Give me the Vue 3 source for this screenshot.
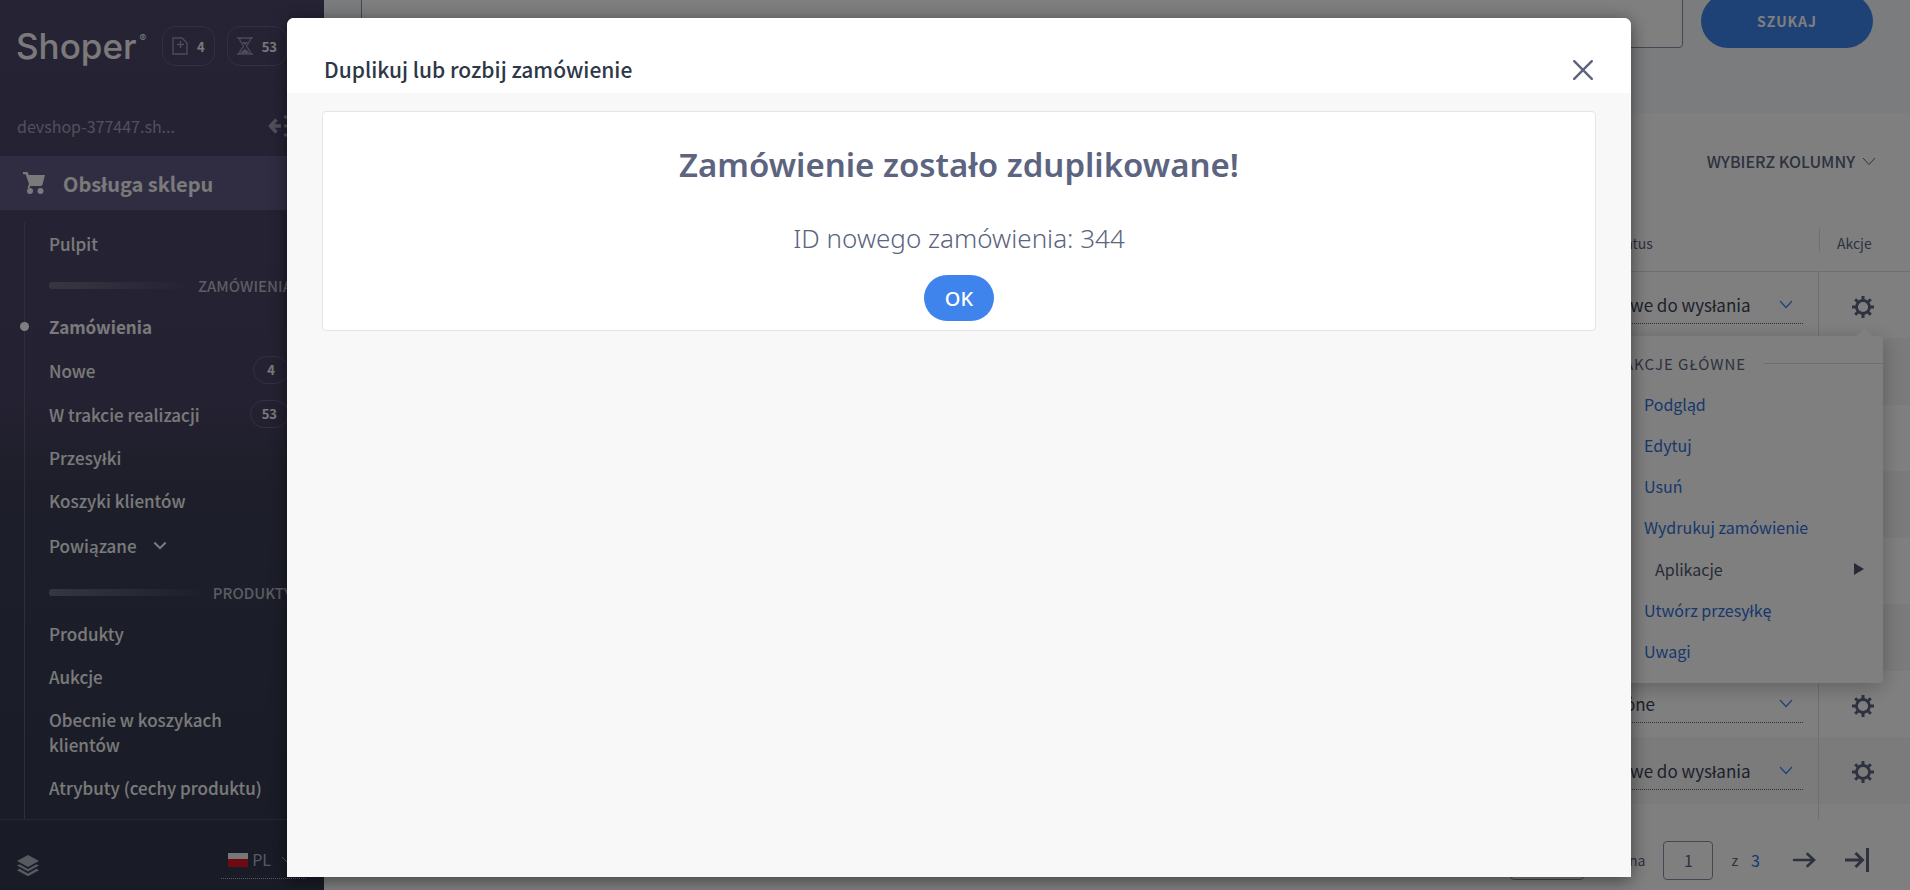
<template>
  <div class="page">
    <aside class="sidebar">
      <header class="brand">
        <a href="#" class="logo">Shoper<sup>®</sup></a>
        <a href="#" class="counter">
          <svg width="16" height="18" viewBox="0 0 16 18" fill="none" stroke="currentColor" stroke-width="1.4">
            <path d="M1 1h9l5 5v11H1zM8.500 4v7M5 7.500h7" />
          </svg>
          <span>4</span>
        </a>
        <a href="#" class="counter">
          <svg width="16" height="18" viewBox="0 0 16 18" fill="none" stroke="currentColor" stroke-width="1.3">
            <path d="M0 1h16M0 17h16M2.500 1c0 5 4 6 4 8s-4 3-4 8M13.500 1c0 5-4 6-4 8s4 3 4 8" />
            <path d="M5 5h6l-3 3zM4 16.500c0-3 3-3 4-5 1 2 4 2 4 5z" fill="currentColor" stroke="none" />
          </svg>
          <span>53</span>
        </a>
      </header>

      <div class="shop">
        <span>devshop-377447.sh...</span>
        <button class="plain" aria-label="Zwiń menu">
          <svg width="24" height="22" viewBox="0 0 24 22" fill="none" stroke="currentColor" stroke-width="3.400">
            <path d="M8.500 4.500L2.500 11l6 6.500M3 11h10" />
            <path d="M17.500 2v.01M17.500 11v.01M17.500 20v.01" stroke-linecap="round" />
          </svg>
        </button>
      </div>

      <a href="#" class="section">
        <svg width="22" height="22" viewBox="0 0 22 22" fill="currentColor">
          <path d="M0 0h4.500l1.300 3H22l-2.500 9.500c-.2.900-.9 1.500-1.900 1.500H7.200L6.700 16H4.500L6 12 2.700 2.200H0z" />
          <circle cx="7" cy="19" r="3" />
          <circle cx="17.500" cy="19" r="3" />
        </svg>
        Obsługa sklepu
      </a>

      <nav class="menu">
        <template v-for="item in menu" :key="item.label">
          <div v-if="item.heading" class="menu-heading"><i></i>{{ item.label }}</div>
          <a v-else href="#" class="menu-item" :class="{ active: item.active, expandable: item.expandable }">
            <span>{{ item.label }}</span>
            <svg v-if="item.expandable" width="14" height="9" viewBox="0 0 16 10" fill="none" stroke="currentColor" stroke-width="2.400">
              <path d="M1.500 1.500L8 8l6.500-6.500" />
            </svg>
            <b v-if="item.count">{{ item.count }}</b>
          </a>
        </template>
      </nav>

      <footer class="side-footer">
        <svg width="22" height="22" viewBox="0 0 22 22" fill="currentColor">
          <path d="M11 0l11 6-11 6L0 6z" />
          <path d="M2.500 9.200L11 14l8.500-4.800L22 10.600l-11 6-11-6z" />
          <path d="M2.500 13.800L11 18.400l8.500-4.600L22 15.200l-11 6-11-6z" />
        </svg>
        <button class="plain lang">
          <i class="flag"></i>PL
          <svg width="12" height="8" viewBox="0 0 12 8" fill="none" stroke="currentColor"><path d="M1 1l5 5 5-5" /></svg>
        </button>
      </footer>
    </aside>

    <main class="content">
      <form class="search" @submit.prevent>
        <input type="text" aria-label="Szukaj zamówienia" />
        <button>SZUKAJ</button>
      </form>

      <div class="toolbar">
        <button class="plain">
          WYBIERZ KOLUMNY
          <svg width="14" height="9" viewBox="0 0 14 9" fill="none" stroke="currentColor"><path d="M1 1l6 6.500L13 1" /></svg>
        </button>
      </div>

      <table class="orders">
        <thead>
          <tr>
            <th></th>
            <th class="status">Status</th>
            <th class="actions">Akcje</th>
          </tr>
        </thead>
        <tbody>
          <tr v-for="(status, i) in orders" :key="i">
            <td></td>
            <td class="status">
              <div class="select">
                <select aria-label="Status zamówienia">
                  <option>{{ status }}</option>
                </select>
                <svg width="14" height="9" viewBox="0 0 14 9" fill="none" stroke="currentColor" stroke-width="1.200"><path d="M1 1l6 6.500L13 1" /></svg>
              </div>
            </td>
            <td class="actions">
              <button class="plain gear" aria-label="Akcje">
                <svg width="22" height="22" viewBox="-11 -11 22 22" fill="none" stroke="currentColor">
                  <circle r="6.500" stroke-width="2.800" />
                  <path d="M0-7v-4M0 7v4M-7 0h-4M7 0h4" stroke-width="3" />
                  <path d="M5-5l2.800-2.800M-5-5l-2.800-2.800M5 5l2.800 2.800M-5 5l-2.800 2.800" stroke-width="3" />
                </svg>
              </button>
              <div v-if="i === 0" class="dropdown">
                <h4>AKCJE GŁÓWNE</h4>
                <template v-for="action in actions" :key="action">
                  <button v-if="action === 'Aplikacje'" class="plain submenu">
                    {{ action }}
                    <svg width="10" height="12" viewBox="0 0 10 12" fill="currentColor"><path d="M0 0l10 6-10 6z" /></svg>
                  </button>
                  <a v-else href="#">{{ action }}</a>
                </template>
              </div>
            </td>
          </tr>
        </tbody>
        <tfoot>
          <tr>
            <td></td>
            <td></td>
            <td class="actions"></td>
          </tr>
        </tfoot>
      </table>

      <div class="pagination">
        <select class="per-page" aria-label="Liczba na stronie">
          <option>10</option>
        </select>
        <label for="page-number">Strona</label>
        <input id="page-number" v-model="page" type="text" />
        <span>z</span>
        <a href="#" class="last-number">3</a>
        <button class="plain next" aria-label="Następna strona">
          <svg width="24" height="16" viewBox="0 0 24 16" fill="none" stroke="currentColor" stroke-width="2.600" stroke-linecap="round">
            <path d="M2 8h19M15.500 2l6.500 6-6.500 6" />
          </svg>
        </button>
        <button class="plain" aria-label="Ostatnia strona">
          <svg width="26" height="24" viewBox="0 0 26 24" fill="none" stroke="currentColor" stroke-width="3">
            <path d="M1 12h17M11.500 5l7 7-7 7M23.500 0v24" />
          </svg>
        </button>
      </div>
    </main>

    <div v-if="open" class="overlay">
      <section class="modal" role="dialog" aria-labelledby="modal-title">
        <header class="modal-header">
          <h2 id="modal-title">Duplikuj lub rozbij zamówienie</h2>
          <button class="plain" aria-label="Zamknij" @click="open = false">
            <svg width="20" height="20" viewBox="0 0 20 20" fill="none" stroke="currentColor" stroke-width="2.400" stroke-linecap="round">
              <path d="M1.200 1.200l17.600 17.600M18.800 1.200L1.200 18.800" />
            </svg>
          </button>
        </header>
        <div class="modal-body">
          <div class="card">
            <h1>Zamówienie zostało zduplikowane!</h1>
            <p>ID nowego zamówienia: {{ newOrderId }}</p>
            <button class="ok" @click="open = false">OK</button>
          </div>
        </div>
      </section>
    </div>
  </div>
</template>

<script setup>
import { ref } from 'vue'

const open = ref(true)
const page = ref('1')
const newOrderId = 344

const menu = [
  { label: 'Pulpit' },
  { label: 'ZAMÓWIENIA', heading: true },
  { label: 'Zamówienia', active: true },
  { label: 'Nowe', count: 4 },
  { label: 'W trakcie realizacji', count: 53 },
  { label: 'Przesyłki' },
  { label: 'Koszyki klientów' },
  { label: 'Powiązane', expandable: true },
  { label: 'PRODUKTY', heading: true },
  { label: 'Produkty' },
  { label: 'Aukcje' },
  { label: 'Obecnie w koszykach klientów' },
  { label: 'Atrybuty (cechy produktu)' },
]

const actions = ['Podgląd', 'Edytuj', 'Usuń', 'Wydrukuj zamówienie', 'Aplikacje', 'Utwórz przesyłkę', 'Uwagi']

const orders = [
  'Gotowe do wysłania',
  'Gotowe do wysłania',
  'Złożone',
  'Gotowe do wysłania',
  'Złożone',
  'Gotowe do wysłania',
  'Złożone',
  'Gotowe do wysłania',
]
</script>

<style>
body {
  margin: 0;
  overflow: hidden;
}
</style>

<style scoped>
* {
  box-sizing: border-box;
}

.page {
  display: flex;
  height: 100vh;
  overflow: hidden;
  background: #fff;
  color: #5c6480;
  font-family: "Noto Sans CJK JP", "Noto Sans", sans-serif;
  font-size: 16px;
  line-height: 25px;
}

a {
  color: inherit;
  text-decoration: none;
}

svg {
  display: block;
  flex: none;
}

button,
input,
select {
  font: inherit;
  color: inherit;
}

.plain {
  display: flex;
  align-items: center;
  padding: 0;
  border: 0;
  background: none;
}

/* sidebar */
.sidebar {
  display: flex;
  flex: none;
  flex-direction: column;
  width: 324px;
  background: linear-gradient(#4c466a, #494364 45%, #3a3d54 55%, #32384c);
  color: #f4f4f6;
}

.brand {
  display: flex;
  flex: none;
  align-items: center;
  height: 92px;
  padding-left: 16px;
}

.logo {
  display: flex;
  width: 146px;
  font-family: Inter, sans-serif;
  font-size: 35px;
  font-weight: 500;
  line-height: 40px;
}

.logo sup {
  margin-left: 3px;
  font-size: 10px;
  font-weight: 400;
  line-height: 24px;
}

.counter {
  display: flex;
  align-items: center;
  gap: 9px;
  height: 40px;
  margin-right: 12px;
  padding: 0 9px;
  border: 1px solid #66608a;
  border-radius: 13px;
  font-size: 13px;
  font-weight: 700;
}

.counter svg {
  color: #9a98b4;
}

.shop {
  display: flex;
  flex: none;
  align-items: center;
  justify-content: space-between;
  height: 64px;
  padding: 4px 32px 0 17px;
  color: #a3a1b5;
}

.section {
  display: flex;
  flex: none;
  align-items: center;
  gap: 18px;
  height: 54px;
  padding-left: 23px;
  background: #605a86;
  font-size: 20px;
  font-weight: 700;
}

.menu {
  flex: 1;
  min-height: 0;
  margin-top: 12px;
  padding-left: 49px;
  overflow: hidden;
  background: linear-gradient(#5d5e78, #5d5e78) 24px 0 / 1px 100% no-repeat;
  font-size: 17px;
  font-weight: 500;
}

.menu-item {
  display: flex;
  align-items: center;
  min-height: 43px;
  padding: 9px 35px 9px 0;
}

.menu-item.active {
  font-weight: 700;
}

.menu-item.active::before {
  content: "";
  width: 9px;
  height: 9px;
  margin: 0 20px 0 -29px;
  border-radius: 50%;
  background: #fff;
}

.menu-item.expandable {
  min-height: 46px;
  margin-bottom: 4px;
  gap: 16px;
}

.menu-item b {
  min-width: 36px;
  height: 28px;
  margin: -1px 0 -1px auto;
  padding: 0 11px;
  border: 1px solid #66608a;
  border-radius: 14px;
  font-size: 13px;
  line-height: 26px;
  text-align: center;
}

.menu-heading {
  display: flex;
  align-items: center;
  gap: 4px;
  height: 40px;
  padding-right: 32px;
  color: #b9b8c6;
  font-size: 15px;
}

.menu-heading i {
  flex: 1;
  height: 7px;
  border-radius: 3px;
  background: linear-gradient(90deg, #6e6d84, transparent);
}

.side-footer {
  display: flex;
  flex: none;
  align-items: center;
  justify-content: space-between;
  height: 71px;
  padding: 22px 18px 0 17px;
  border-top: 1px solid #4b5068;
  color: #b0b4c4;
}

.lang {
  gap: 4px;
  height: 38px;
  margin-top: -12px;
  padding: 0 13px 0 7px;
  border-bottom: 1px dotted #b0b4c4;
}

.lang svg {
  margin-left: 6px;
}

.flag {
  width: 20px;
  height: 14px;
  background: linear-gradient(#eee 42%, #dc1423 42%);
}

/* orders list */
.content {
  flex: 1;
  min-width: 0;
}

.search {
  display: flex;
  align-items: flex-start;
  gap: 18px;
  height: 119px;
  margin-top: -6px;
  padding: 0 37px;
  background: #f5f9fc;
}

.search input {
  flex: 1;
  height: 54px;
  border: 1px solid #8a8fa8;
  border-radius: 4px;
  background: #fff;
}

.search button {
  width: 172px;
  height: 54px;
  border: 0;
  border-radius: 27px;
  background: #3f84ec;
  color: #fff;
  font-size: 14px;
  font-weight: 700;
  letter-spacing: 1px;
}

.toolbar {
  display: flex;
  justify-content: flex-end;
  height: 97px;
  padding-right: 34px;
  font-weight: 500;
}

.toolbar button {
  gap: 7px;
}

.orders {
  width: 100%;
  border-collapse: separate;
  border-spacing: 0;
  table-layout: fixed;
}

.orders th,
.orders td {
  height: inherit;
  padding: 0;
  font-weight: 400;
  text-align: left;
}

.orders thead tr {
  height: 62px;
}

.orders thead th {
  padding-top: 6px;
  border-bottom: 1px solid #dedee2;
  font-size: 14px;
}

.orders .status {
  width: 226px;
}

.orders th.status {
  padding-left: 20px;
}

.orders .actions {
  position: relative;
  width: 92px;
  border-left: 1px solid #dedee2;
}

.orders th.actions {
  padding-left: 18px;
  border-left-color: transparent;
  background: linear-gradient(#dedee2, #dedee2) 0 18px / 1px 24px no-repeat;
}

.orders tbody tr {
  height: 66px;
}

.orders tbody tr:nth-child(even) {
  height: 67px;
  background: #f6f6f6;
}

.orders tfoot tr {
  height: 16px;
}

.select {
  display: flex;
  align-items: center;
  height: 38px;
  margin-right: 15px;
  padding-right: 10px;
  border-bottom: 1px dotted #5c6480;
  color: #3f84ec;
}

.select select {
  flex: 1;
  padding: 0;
  border: 0;
  background: none;
  appearance: none;
  color: #3c4256;
  font-size: 17px;
}

.gear {
  margin: 3px 0 0 33px;
}

.dropdown {
  position: absolute;
  z-index: 1;
  top: 64px;
  right: 27px;
  width: 300px;
  height: 347px;
  border-radius: 4px;
  background: #fff;
  box-shadow: 0 4px 20px rgba(0, 0, 0, 0.25);
}

.dropdown::before {
  content: "";
  position: absolute;
  top: -8px;
  right: 9px;
  border: 9px solid transparent;
  border-top: 0;
  border-bottom-color: #fff;
}

.dropdown h4 {
  display: flex;
  align-items: center;
  gap: 18px;
  height: 41px;
  margin: 7px 0 0;
  padding-left: 41px;
  font-size: 15px;
  font-weight: 400;
  letter-spacing: 1px;
}

.dropdown h4::after {
  content: "";
  flex: 1;
  height: 1px;
  background: #dedee2;
}

.dropdown a,
.submenu {
  display: flex;
  align-items: center;
  height: 41px;
  padding-left: 61px;
  color: #3070d8;
}

.dropdown .submenu {
  justify-content: space-between;
  width: 100%;
  height: 42px;
  padding: 0 19px 0 72px;
  color: #50566c;
}

.pagination {
  display: flex;
  align-items: center;
  justify-content: flex-end;
  height: 40px;
  margin-top: 20px;
  padding-right: 40px;
  font-size: 14px;
}

.pagination input,
.per-page {
  width: 50px;
  height: 39px;
  padding: 0;
  border: 1px solid #8a8fa8;
  border-radius: 4px;
  background: #fff;
  text-align: center;
  font-size: 16px;
}

.per-page {
  width: 74px;
  margin-right: 18px;
}

.pagination label {
  margin-right: 18px;
}

.pagination input {
  margin-right: 18px;
}

.last-number {
  margin-left: 13px;
  color: #3070d8;
  font-size: 16px;
}

.next {
  margin: 0 28px 0 32px;
}

/* modal */
.overlay {
  position: fixed;
  z-index: 10;
  inset: 0;
  display: flex;
  padding: 18px 279px 13px 287px;
  background: rgba(0, 0, 0, 0.5);
}

.modal {
  display: flex;
  flex: 1;
  flex-direction: column;
  overflow: hidden;
  border-radius: 7px 7px 0 0;
  background: #f8f8f8;
  box-shadow: 0 3px 18px rgba(0, 0, 0, 0.5);
}

.modal-header {
  display: flex;
  align-items: center;
  justify-content: space-between;
  height: 75px;
  padding: 28px 38px 0 37px;
  background: #fff;
}

.modal-header h2 {
  margin: 0;
  color: #2d3748;
  font-size: 21px;
  font-weight: 500;
}

.modal-body {
  padding: 18px 35px;
}

.card {
  display: flex;
  flex-direction: column;
  align-items: center;
  padding: 30px 20px 9px;
  border: 1px solid #e4e4e6;
  border-radius: 4px;
  background: #fff;
  font-family: "Noto Sans", sans-serif;
}

.card h1 {
  margin: 0;
  font-size: 33px;
  font-weight: 600;
  line-height: 46px;
}

.card p {
  margin: 32px 0 19px;
  font-size: 26px;
  font-weight: 300;
  line-height: 36px;
}

.ok {
  width: 70px;
  height: 46px;
  border: 0;
  border-radius: 23px;
  background: #3f84ec;
  color: #fff;
  font-size: 20px;
  font-weight: 500;
}
</style>
